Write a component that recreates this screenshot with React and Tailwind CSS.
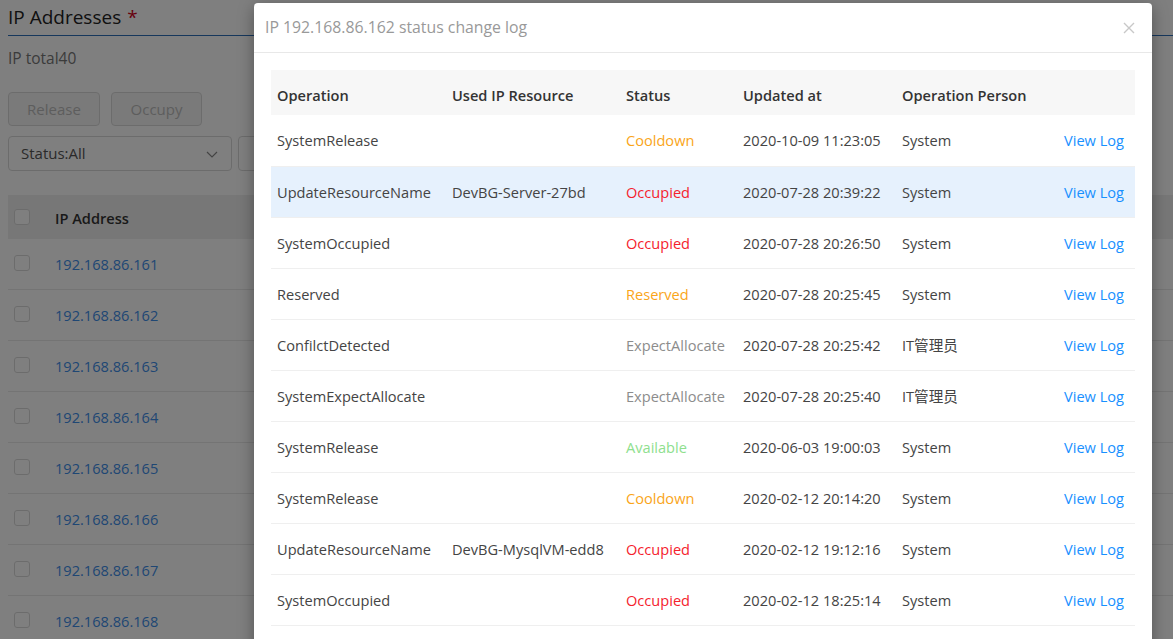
import React from 'react';

const logs = [
  { op: 'SystemRelease', res: '', status: 'Cooldown', at: '2020-10-09 11:23:05', by: 'System' },
  { op: 'UpdateResourceName', res: 'DevBG-Server-27bd', status: 'Occupied', at: '2020-07-28 20:39:22', by: 'System', hl: true },
  { op: 'SystemOccupied', res: '', status: 'Occupied', at: '2020-07-28 20:26:50', by: 'System' },
  { op: 'Reserved', res: '', status: 'Reserved', at: '2020-07-28 20:25:45', by: 'System' },
  { op: 'ConfilctDetected', res: '', status: 'ExpectAllocate', at: '2020-07-28 20:25:42', by: 'IT管理员' },
  { op: 'SystemExpectAllocate', res: '', status: 'ExpectAllocate', at: '2020-07-28 20:25:40', by: 'IT管理员' },
  { op: 'SystemRelease', res: '', status: 'Available', at: '2020-06-03 19:00:03', by: 'System' },
  { op: 'SystemRelease', res: '', status: 'Cooldown', at: '2020-02-12 20:14:20', by: 'System' },
  { op: 'UpdateResourceName', res: 'DevBG-MysqlVM-edd8', status: 'Occupied', at: '2020-02-12 19:12:16', by: 'System' },
  { op: 'SystemOccupied', res: '', status: 'Occupied', at: '2020-02-12 18:25:14', by: 'System' },
];

const statusColor = {
  Cooldown: 'text-[#faa519]',
  Reserved: 'text-[#faa519]',
  Occupied: 'text-[#f5222d]',
  ExpectAllocate: 'text-[#8c8c8c]',
  Available: 'text-[#8ee08e]',
};

const ips = ['161', '162', '163', '164', '165', '166', '167', '168'];

function Checkbox() {
  return <span className="block w-[16px] h-[16px] rounded-[3px] border border-[#d9d9d9] bg-white" />;
}

function App() {
  return (
    <div className="relative w-full h-[639px] overflow-hidden bg-white text-[14px] text-[#333]" style={{ fontFamily: '"Open Sans", "Noto Sans CJK SC", sans-serif' }}>
      {/* page behind the modal */}
      <div className="pl-[8px]">
        <div className="h-[36px] border-b border-[#2d6fb8] flex items-end pb-[8px]">
          <span className="text-[19px] text-[#222] leading-none">IP Addresses</span>
          <span className="text-[19px] text-[#d0021b] leading-none ml-[6px]">*</span>
        </div>
        <div className="mt-[12px] text-[15.5px] text-[#777] leading-[20px]">IP total40</div>
        <div className="mt-[24px] flex gap-[11px]">
          <button className="w-[92px] h-[34px] rounded-[4px] border border-[#d9d9d9] bg-[#f5f5f5] text-[15px] text-[#bbb]">Release</button>
          <button className="w-[91px] h-[34px] rounded-[4px] border border-[#d9d9d9] bg-[#f5f5f5] text-[15px] text-[#bbb]">Occupy</button>
        </div>
        <div className="mt-[10px] flex gap-[6px]">
          <div className="w-[224px] h-[35px] rounded-[4px] border border-[#d9d9d9] flex items-center justify-between px-[12px]">
            <span className="text-[15px] text-[#555]">Status:All</span>
            <svg width="14" height="14" viewBox="0 0 14 14" fill="none" stroke="#888" strokeWidth="1.2"><path d="M2 5l5 5 5-5" /></svg>
          </div>
          <div className="w-[200px] h-[35px] rounded-[4px] border border-[#d9d9d9]" />
        </div>
        <div className="mt-[24px]">
          <div className="h-[44px] bg-[#efefef] flex items-center pt-[3px]">
            <div className="w-[47px] pl-[6px] self-start pt-[11px]"><Checkbox /></div>
            <span className="text-[14.6px] font-semibold text-[#333]">IP Address</span>
          </div>
          {ips.map((n) => (
            <div key={n} className="h-[51px] border-b border-[#e8e8e8] flex items-center pt-[1px]">
              <div className="w-[47px] pl-[6px] self-start pt-[15px]"><Checkbox /></div>
              <span className="text-[14.6px] text-[#3f8ee8]">192.168.86.{n}</span>
            </div>
          ))}
        </div>
      </div>

      {/* overlay */}
      <div className="absolute inset-0 bg-black/50" />

      {/* modal */}
      <div className="absolute left-[254px] top-[3px] w-[898px] h-[700px] bg-white rounded-[4px] shadow-[0_4px_16px_rgba(0,0,0,0.35)]">
        <div className="h-[50px] border-b border-[#e8e8e8] flex items-center justify-between pl-[11px] pr-[17px]">
          <span className="text-[15.8px] text-[#999]">IP 192.168.86.162 status change log</span>
          <svg width="12" height="12" viewBox="0 0 12 12" stroke="#c8c8c8" strokeWidth="1.4"><path d="M1 1l10 10M11 1L1 11" /></svg>
        </div>
        <div className="p-[17px] text-[14.6px]">
          <table className="w-full table-fixed border-collapse">
            <thead>
              <tr className="h-[45px] bg-[#f7f7f7] text-left">
                <th className="w-[175px] pl-[6px] pt-[6px] font-semibold text-[#333]">Operation</th>
                <th className="w-[174px] pl-[6px] pt-[6px] font-semibold text-[#333]">Used IP Resource</th>
                <th className="w-[117px] pl-[6px] pt-[6px] font-semibold text-[#333]">Status</th>
                <th className="w-[159px] pl-[6px] pt-[6px] font-semibold text-[#333]">Updated at</th>
                <th className="w-[150px] pl-[6px] pt-[6px] font-semibold text-[#333]">Operation Person</th>
                <th />
              </tr>
            </thead>
            <tbody>
              {logs.map((r, i) => (
                <tr key={i} className={`h-[51px] border-b border-[#efefef] ${r.hl ? 'bg-[#e6f1fd]' : ''}`}>
                  <td className="pl-[6px] pt-[2px] text-[#444] whitespace-nowrap">{r.op}</td>
                  <td className="pl-[6px] pt-[2px] text-[#444] whitespace-nowrap">{r.res}</td>
                  <td className={`pl-[6px] pt-[2px] whitespace-nowrap ${statusColor[r.status]}`}>{r.status}</td>
                  <td className="pl-[6px] pt-[2px] text-[#444] whitespace-nowrap">{r.at}</td>
                  <td className="pl-[6px] pt-[2px] text-[#444] whitespace-nowrap">{r.by}</td>
                  <td className="pr-[11px] pt-[2px] text-right text-[#1890ff] whitespace-nowrap">View Log</td>
                </tr>
              ))}
            </tbody>
          </table>
        </div>
      </div>
    </div>
  );
}

export default App;
